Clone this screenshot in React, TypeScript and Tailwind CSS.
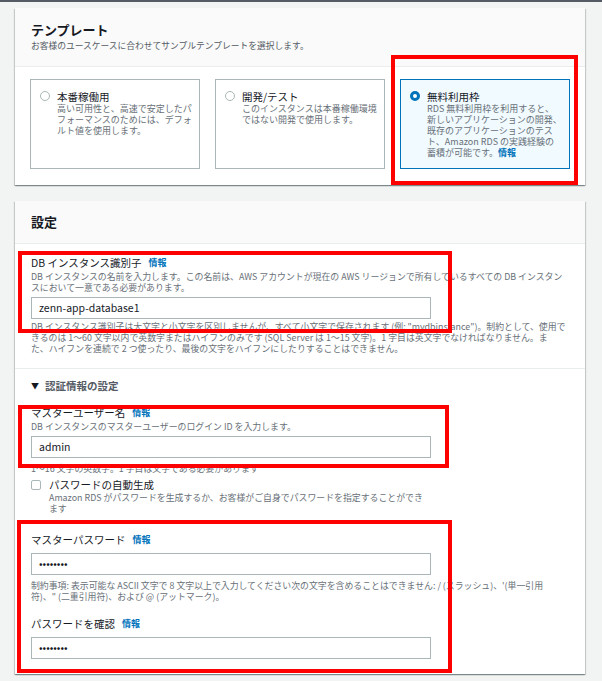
import React from 'react';

const font = "font-['Noto_Sans_CJK_JP','Noto_Sans',sans-serif]";
const card =
  'bg-white shadow-[0_1px_1px_0_rgba(0,28,36,0.3),1px_1px_1px_0_rgba(0,28,36,0.15),-1px_1px_1px_0_rgba(0,28,36,0.15)]';
const help = 'whitespace-nowrap text-[8.9px] leading-[11px] text-[#687078]';

function Info() {
  return <span className="ml-[7px] text-[9px] font-bold text-[#0073bb]">情報</span>;
}

function Radio({ checked }: { checked?: boolean }) {
  return checked ? (
    <span className="mt-[1px] h-[10px] w-[10px] shrink-0 rounded-full border-[3px] border-[#0073bb] bg-white" />
  ) : (
    <span className="mt-[1px] h-[10px] w-[10px] shrink-0 rounded-full border border-[#aab7b8] bg-white" />
  );
}

function Tile({
  title,
  children,
  checked,
}: {
  title: string;
  children: React.ReactNode;
  checked?: boolean;
}) {
  return (
    <div
      className={`flex h-[90px] gap-[7px] pl-[9px] pt-[10px] border ${
        checked ? 'border-[#0073bb] bg-[#f1faff]' : 'border-[#aab7b8] bg-white'
      }`}
    >
      <Radio checked={checked} />
      <div>
        <div className="text-[10.5px] leading-[13px] text-[#16191f]">{title}</div>
        <div className="whitespace-nowrap text-[9px] leading-[11px] text-[#687078]">{children}</div>
      </div>
    </div>
  );
}

function Input({ value }: { value: string }) {
  return (
    <div className="flex h-[22px] w-[400px] items-center border border-[#aab7b8] bg-white px-[7px] text-[10.5px] text-[#16191f]">
      {value}
    </div>
  );
}

function Label({ text }: { text: string }) {
  return (
    <div className="flex items-center text-[10.5px] leading-[14px] text-[#16191f]">
      {text}
      <Info />
    </div>
  );
}

export default function App() {
  return (
    <div className={`relative min-h-[681px] border-t-2 border-[#545b64] bg-[#f2f3f3] pl-[15px] pr-[17px] pt-[6px] ${font}`}>
      <section className={card}>
        <header className="h-[59px] border-b border-[#eaeded] bg-[#fafafa] px-4 pt-[14px]">
          <h2 className="text-[13px] font-bold leading-[16px] text-[#16191f]">テンプレート</h2>
          <p className="mt-[2px] text-[8.75px] leading-[12px] text-[#545b64]">
            お客様のユースケースに合わせてサンプルテンプレートを選択します。
          </p>
        </header>
        <div className="grid grid-cols-3 gap-[15px] px-[15px] pb-4 pt-3">
          <Tile title="本番稼働用">
            高い可用性と、高速で安定したパ
            <br />
            フォーマンスのためには、デフォ
            <br />
            ルト値を使用します。
          </Tile>
          <Tile title="開発/テスト">
            このインスタンスは本番稼働環境
            <br />
            ではない開発で使用します。
          </Tile>
          <Tile title="無料利用枠" checked>
            RDS 無料利用枠を利用すると、
            <br />
            新しいアプリケーションの開発、
            <br />
            既存のアプリケーションのテス
            <br />
            ト、Amazon RDS の実践経験の
            <br />
            蓄積が可能です。<span className="font-bold text-[#0073bb]">情報</span>
          </Tile>
        </div>
      </section>

      <section className={`mt-4 ${card}`}>
        <header className="flex h-[43px] items-center border-b border-[#eaeded] bg-[#fafafa] px-4">
          <h2 className="text-[13px] font-bold text-[#16191f]">設定</h2>
        </header>

        <div className="px-4 pb-[14px] pt-3">
          <Label text="DB インスタンス識別子" />
          <p className={`mt-[1px] ${help}`}>
            DB インスタンスの名前を入力します。この名前は、AWS アカウントが現在の AWS リージョンで所有しているすべての DB インスタン
            <br />
            スにおいて一意である必要があります。
          </p>
          <div className="mt-1">
            <Input value="zenn-app-database1" />
          </div>
          <p className={`mt-[2px] ${help}`}>
            DB インスタンス識別子は大文字と小文字を区別しませんが、すべて小文字で保存されます (例: "mydbinstance")。制約として、使用で
            <br />
            きるのは 1～60 文字以内で英数字またはハイフンのみです (SQL Server は 1～15 文字)。1 字目は英文字でなければなりません。ま
            <br />
            た、ハイフンを連続で 2 つ使ったり、最後の文字をハイフンにしたりすることはできません。
          </p>
        </div>

        <div className="border-t border-[#eaeded] px-4 pb-[15px] pt-[10px]">
          <div className="flex items-center gap-[6px] text-[10.5px] font-bold leading-[14px] text-[#545b64]">
            <span className="text-[8px] text-[#16191f]">▼</span>
            認証情報の設定
          </div>

          <div className="mt-[13px]">
            <Label text="マスターユーザー名" />
          </div>
          <p className={`mt-[1px] ${help}`}>DB インスタンスのマスターユーザーのログイン ID を入力します。</p>
          <div className="mt-1">
            <Input value="admin" />
          </div>
          <p className={`mt-[5px] ${help}`}>1～16 文字の英数字。1 字目は文字である必要があります</p>

          <div className="mt-[5px] flex gap-2">
            <span className="mt-[1px] h-[10px] w-[10px] shrink-0 rounded-[2px] border border-[#aab7b8] bg-white" />
            <div>
              <div className="text-[10.5px] leading-[12px] text-[#16191f]">パスワードの自動生成</div>
              <p className={`mt-[1px] ${help}`}>
                Amazon RDS がパスワードを生成するか、お客様がご自身でパスワードを指定することができ
                <br />
                ます
              </p>
            </div>
          </div>

          <div className="mt-[19px]">
            <Label text="マスターパスワード" />
          </div>
          <div className="mt-[6px]">
            <Input value="••••••••" />
          </div>
          <p className={`mt-[5px] ${help}`}>
            制約事項: 表示可能な ASCII 文字で 8 文字以上で入力してください次の文字を含めることはできません: / (スラッシュ)、'(単一引用
            <br />
            符)、" (二重引用符)、および @ (アットマーク)。
          </p>

          <div className="mt-[15px]">
            <Label text="パスワードを確認" />
          </div>
          <div className="mt-[6px]">
            <Input value="••••••••" />
          </div>
        </div>
      </section>

      {/* annotation boxes */}
      <div className="pointer-events-none absolute left-[391px] top-[53px] h-[130px] w-[187px] border-4 border-[#ff0000]" />
      <div className="pointer-events-none absolute left-[18px] top-[249px] h-[82px] w-[434px] border-4 border-[#ff0000]" />
      <div className="pointer-events-none absolute left-[18px] top-[403px] h-[63px] w-[431px] border-4 border-[#ff0000]" />
      <div className="pointer-events-none absolute left-[17px] top-[518px] h-[153px] w-[435px] border-4 border-[#ff0000]" />
    </div>
  );
}
